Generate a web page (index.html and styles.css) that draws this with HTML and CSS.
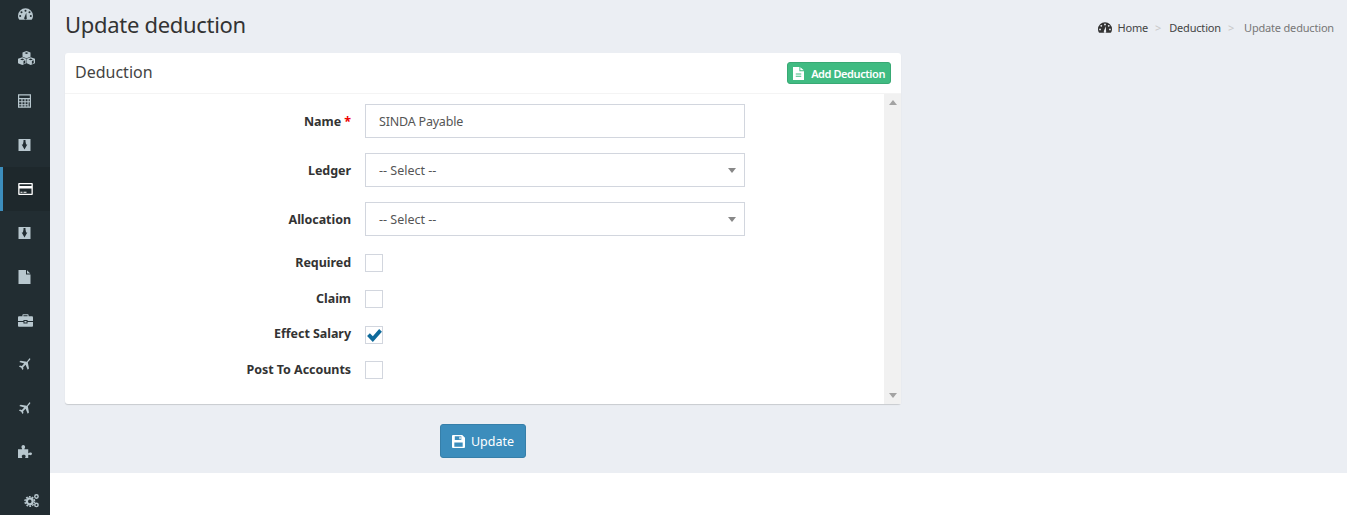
FILE: index.html
```html
<!DOCTYPE html>
<html lang="en">
<head>
<meta charset="utf-8">
<title>Update deduction</title>
<link rel="stylesheet" href="styles.css">
</head>
<body>
<div class="app">
  <aside class="sidebar">
    <a class="nav-item"><svg class="ico i-gauge" viewBox="0.5 2 15 11.500"><path fill-rule="evenodd" d="M8 2a7.500 7.500 0 0 0-7.500 7.500c0 1.700.5 3 1.400 4h12.200c.9-1 1.400-2.300 1.400-4A7.500 7.500 0 0 0 8 2zM8 3.500a1 1 0 1 1 0 2 1 1 0 0 1 0-2zM4 5a1 1 0 1 1 0 2 1 1 0 0 1 0-2zM12 5a1 1 0 1 1 0 2 1 1 0 0 1 0-2zM2.700 8.800a1 1 0 1 1 0 2 1 1 0 0 1 0-2zM13.300 8.800a1 1 0 1 1 0 2 1 1 0 0 1 0-2zM8.800 6.500l.4 5a1.300 1.300 0 1 1-2.400 0z"/></svg></a>
    <a class="nav-item"><svg class="ico i-cubes" viewBox="0.500 0.500 17 14"><path fill-rule="evenodd" d="M9 .5l4 1.500v4.200L9 7.800 5 6.200V2zM4.800 6.800l4 1.500v4.400l-4 1.800-4.300-1.800V8.300zM13.200 6.800l4.300 1.500v4.400l-4.300 1.800-4-1.800V8.300zM9 1.800L7 2.600l2 .8 2-.8zM4.800 8.100L2.600 8.900l2.200.8 2.100-.8zM13.200 8.100l-2.100.8 2.100.8 2.200-.8zM6 10.500v2.900l1.800-.8v-2.800zM14.400 10.500v2.900l1.800-.8v-2.800z"/></svg></a>
    <a class="nav-item"><svg class="ico i-calc" viewBox="1.500 1.500 13 13.500"><path fill-rule="evenodd" d="M1.500 1.500h13v13.500h-13zM2.700 2.700v2.600h10.600V2.700zM2.700 6.500v2h2.200v-2zM6 6.500v2h2v-2zM9.100 6.500v2h1.900v-2zM12.100 6.500v2h1.200v-2zM2.700 9.500v2h2.200v-2zM6 9.500v2h2v-2zM9.100 9.500v2h1.900v-2zM12.100 9.500v4.300h1.200V9.500zM2.700 12.400v1.400h2.200v-1.400zM6 12.400v1.400h2v-1.400zM9.100 12.400v1.400h1.900v-1.400z"/></svg></a>
    <a class="nav-item"><svg class="ico i-down" viewBox="2 2 12 12"><path fill-rule="evenodd" d="M2 2h12v12H2zM7 3v1.500l-.6 3H5.200L8 12.500l2.800-5H9.600L9 4.500V3z"/></svg></a>
    <a class="nav-item active"><svg class="ico i-card" viewBox="0.700 1 14.600 12"><path fill-rule="evenodd" d="M1.500 1h13c.4 0 .8.300.8.800v10.400c0 .5-.4.800-.8.800h-13c-.4 0-.8-.3-.8-.8V1.800c0-.5.4-.8.800-.8zM2 2.200v1.800h12V2.200zM2 6.400v5.400h12V6.400zM3 9.800h2v1H3zM6 9.800h3v1H6z"/></svg></a>
    <a class="nav-item"><svg class="ico i-down" viewBox="2 2 12 12"><path fill-rule="evenodd" d="M2 2h12v12H2zM7 3v1.500l-.6 3H5.200L8 12.500l2.800-5H9.600L9 4.500V3z"/></svg></a>
    <a class="nav-item"><svg class="ico i-file" viewBox="2 1 12 14"><path d="M2 1h7.500v4.500H14V15H2zM10.500 1.200L13.800 4.500h-3.300z"/></svg></a>
    <a class="nav-item"><svg class="ico i-case" viewBox="0.700 1 14.600 12.200"><path fill-rule="evenodd" d="M5 3V1.800C5 1.300 5.300 1 5.800 1h4.400c.5 0 .8.300.8.800V3h3.200c.6 0 1.100.5 1.100 1.100V7.500H10V6.500H6v1H.7V4.100C.7 3.500 1.200 3 1.800 3zM6 2v1h4V2zM.7 8.500H6v1.500h4V8.500h5.300v3.600c0 .6-.5 1.100-1.100 1.100H1.800c-.6 0-1.100-.5-1.100-1.100zM7 7.500h2v1.500H7z"/></svg></a>
    <a class="nav-item"><svg class="ico i-plane" viewBox="1 1 14 14.500"><path d="M13.800 1.300c.8.300.9 1 .4 1.700L11.700 5.700l1.300 7-1.400 1.400-2.400-5.500-2.700 2.700.3 2.100-1.100 1.100-1.300-2.600-2.600-1.300 1.100-1.100 2.100.3 2.700-2.700L2.200 5.400 3.600 4l7 1.300 2.500-3.400c.1-.2.400-.5.700-.6z"/></svg></a>
    <a class="nav-item"><svg class="ico i-plane" viewBox="1 1 14 14.500"><path d="M13.800 1.300c.8.300.9 1 .4 1.700L11.700 5.700l1.300 7-1.400 1.400-2.400-5.500-2.700 2.700.3 2.100-1.100 1.100-1.300-2.600-2.600-1.300 1.100-1.100 2.100.3 2.700-2.700L2.200 5.400 3.600 4l7 1.300 2.500-3.400c.1-.2.400-.5.700-.6z"/></svg></a>
    <a class="nav-item"><svg class="ico i-puzzle" viewBox="1.500 2 13 12"><path d="M1.500 6h3.300c.6 0 .7-.4.400-.9-.4-.5-.5-.9-.5-1.300C4.700 2.800 5.500 2 6.400 2s1.700.8 1.700 1.800c0 .4-.2.800-.5 1.300-.3.500-.2.900.4.900H11v3.100c0 .5.400.6.800.3.400-.3.700-.4 1.100-.4.900 0 1.600.5 1.600 1.200s-.7 1.300-1.600 1.300c-.4 0-.7-.1-1.100-.4-.4-.3-.8-.2-.8.300V14H8.500c-.4 0-.5-.4-.2-.8.2-.3.300-.6.300-.9 0-.8-.8-1.300-1.800-1.300s-1.800.5-1.800 1.300c0 .3.100.6.300.9.300.4.200.8-.2.800H1.500z"/></svg></a>
    <a class="nav-gear"><svg class="ico i-gear" viewBox="0 0 18 16"><g fill="none" stroke="currentColor"><circle cx="6.500" cy="9" r="3.300" stroke-width="2.600"/><circle cx="6.500" cy="9" r="5.400" stroke-width="1.600" stroke-dasharray="2 1.400"/><circle cx="14" cy="3.500" r="1.900" stroke-width="1.600"/><circle cx="14" cy="13" r="1.900" stroke-width="1.600"/></g></svg></a>
  </aside>

  <div class="content-col">
    <main class="content">
      <header class="page-head">
        <h1 class="page-title">Update deduction</h1>
        <nav class="crumbs">
          <svg class="crumb-ico" viewBox="0.5 2 15 11.500"><path fill-rule="evenodd" d="M8 2a7.500 7.500 0 0 0-7.500 7.500c0 1.700.5 3 1.400 4h12.200c.9-1 1.400-2.300 1.400-4A7.500 7.500 0 0 0 8 2zM8 3.500a1 1 0 1 1 0 2 1 1 0 0 1 0-2zM4 5a1 1 0 1 1 0 2 1 1 0 0 1 0-2zM12 5a1 1 0 1 1 0 2 1 1 0 0 1 0-2zM2.700 8.800a1 1 0 1 1 0 2 1 1 0 0 1 0-2zM13.300 8.800a1 1 0 1 1 0 2 1 1 0 0 1 0-2zM8.800 6.500l.4 5a1.300 1.300 0 1 1-2.400 0z"/></svg>
          <a class="crumb">Home</a><span class="sep">&gt;</span>
          <a class="crumb">Deduction</a><span class="sep">&gt;</span>
          <span class="crumb current">Update deduction</span>
        </nav>
      </header>

      <section class="card">
        <div class="card-head">
          <h3 class="card-title">Deduction</h3>
          <a class="btn-add"><svg class="btn-add-ico" viewBox="0 0 12 14"><path fill-rule="evenodd" d="M0 0h7v4.500h5V14H0zM8 .2L11.800 3.500H8zM3 7v1h6V7zM3 9.500v1h6v-1z"/></svg>Add Deduction</a>
        </div>
        <div class="card-body">
          <form class="form">
            <div class="row">
              <label class="lbl">Name <span class="req">*</span></label>
              <input class="field" type="text" value="SINDA Payable">
            </div>
            <div class="row">
              <label class="lbl">Ledger</label>
              <div class="select-wrap"><div class="field select">-- Select --</div><span class="caret"></span></div>
            </div>
            <div class="row">
              <label class="lbl">Allocation</label>
              <div class="select-wrap"><div class="field select">-- Select --</div><span class="caret"></span></div>
            </div>
            <div class="row row-check">
              <label class="lbl">Required</label><span class="box"></span>
            </div>
            <div class="row row-check">
              <label class="lbl">Claim</label><span class="box"></span>
            </div>
            <div class="row row-check">
              <label class="lbl">Effect Salary</label>
              <span class="box"><svg class="tick" viewBox="0 0 16 14"><path d="M0 7.500L3 4.500l3.200 3.200L13 0 16 3 6.200 14z"/></svg></span>
            </div>
            <div class="row row-check">
              <label class="lbl">Post To Accounts</label><span class="box"></span>
            </div>
          </form>
          <div class="scrollbar"><span class="arrow up"></span><span class="arrow down"></span></div>
        </div>
      </section>

      <div class="actions">
        <button class="btn-update" type="button"><svg class="btn-update-ico" viewBox="0 0 14 14"><path fill-rule="evenodd" d="M1 0h10l3 3v10c0 .6-.4 1-1 1H1c-.6 0-1-.4-1-1V1c0-.6.4-1 1-1zM3 1.300v4h7v-4zM8 1.900h1.300v2.800H8zM2.500 8v4.700h9V8z"/></svg>Update</button>
      </div>
    </main>
  </div>
</div>
</body>
</html>
```
FILE: styles.css
```css
* { box-sizing: border-box; }
html, body { margin: 0; height: 100%; background: #fff; }
body { font-family: "Noto Sans", sans-serif; font-size: 13px; color: #333; overflow: hidden; }

.app { display: flex; height: 515px; }

.sidebar { width: 50px; flex: none; background: #222d32; display: flex; flex-direction: column; color: #b8c7ce; margin-top: -8px; height: 523px; }
.nav-item { height: 43.8px; flex: none; display: flex; align-items: center; padding-left: 18px; }
.nav-item.active { background: #1e282c; color: #fff; border-left: 3px solid #3c8dbc; padding-left: 15px; }
.nav-gear { display: flex; justify-content: flex-end; padding: 19px 10px 0 0; }
.ico { fill: currentColor; display: block; }
.i-gauge { width: 15px; height: 12px; }
.i-cubes { width: 17px; height: 14px; }
.i-calc { width: 13px; height: 14px; }
.i-down { width: 13px; height: 12px; }
.i-card { width: 15px; height: 12px; }
.i-file { width: 13px; height: 14px; }
.i-case { width: 15px; height: 13px; }
.i-plane { width: 13px; height: 13px; }
.i-puzzle { width: 14px; height: 13px; }
.i-gear { width: 16px; height: 15px; }

.content-col { flex: 1; min-width: 0; }
.content { height: 473px; background: #ebeef3; padding: 0 13px 0 15px; }

.page-head { display: flex; justify-content: space-between; align-items: center; height: 53px; }
.page-title { margin: 0; font-weight: 400; font-size: 22px; letter-spacing: -0.3px; color: #333; padding-bottom: 5px; }
.crumbs { display: flex; align-items: center; font-size: 11px; letter-spacing: -0.18px; color: #444; padding-top: 1px; }
.crumb-ico { width: 14px; height: 11px; fill: #333; margin-right: 5px; }
.sep { color: #c8c8c8; margin: 0 8px 0 7px; }
.current { color: #777; margin-left: 2px; }

.card { width: 836px; background: #fff; border-radius: 3px; box-shadow: 0 1px 1px rgba(0,0,0,.15); }
.card-head { height: 41px; border-bottom: 1px solid #f4f4f4; display: flex; align-items: center; justify-content: space-between; padding: 0 10px; }
.card-title { margin: 0; font-size: 16px; font-weight: 400; color: #444; padding-bottom: 2px; }
.btn-add { display: flex; align-items: center; height: 22px; padding: 0 5px; background: #40bb82; border: 1px solid #38a974; border-radius: 3px; color: #fff; font-size: 11px; letter-spacing: -0.42px; font-weight: 600; }
.btn-add-ico { width: 11px; height: 13px; fill: #fff; margin-right: 7px; }

.card-body { display: flex; height: 310px; }
.form { flex: 1; padding-top: 10px; }
.row { display: flex; align-items: center; height: 34px; margin-bottom: 15px; }
.row-check { height: 20.670px; margin-bottom: 15px; position: relative; top: 2px; }
.row-check .lbl { padding-bottom: 1.4px; }
.lbl { width: 286px; text-align: right; font-weight: 700; font-size: 12.500px; letter-spacing: -0.05px; color: #333; margin-right: 14px; }
.req { color: #e00; }
.field { width: 380px; height: 34px; border: 1px solid #d2d6de; background: #fff; padding: 0 13px; font: 12.500px "Noto Sans", sans-serif; letter-spacing: -0.2px; color: #555; outline: none; }
.select { display: flex; align-items: center; letter-spacing: 0; }
.select-wrap { position: relative; }
.caret { position: absolute; right: 9px; top: 15px; border: 4.500px solid transparent; border-top: 5px solid #888; border-bottom: 0; }
.box { width: 18px; height: 18px; border: 1px solid #d2d6de; background: #fff; position: relative; flex: none; display: block; }
.tick { position: absolute; left: 1px; top: 2px; width: 15px; height: 13px; fill: #0e6a9b; }

.scrollbar { width: 17px; flex: none; background: #f1f1f1; display: flex; flex-direction: column; justify-content: space-between; align-items: center; padding: 6px 0; }
.arrow { border: 4px solid transparent; display: block; }
.arrow.up { border-bottom: 5px solid #a3a3a3; border-top: 0; }
.arrow.down { border-top: 5px solid #a3a3a3; border-bottom: 0; }

.actions { padding: 20px 0 0 375px; }
.btn-update { display: flex; align-items: center; width: 86px; height: 34px; justify-content: center; background: #3c8dbc; border: 1px solid #367fa9; border-radius: 3px; color: #fff; font: 12.500px "Noto Sans", sans-serif; }
.btn-update-ico { width: 13px; height: 13px; fill: #fff; margin-right: 6px; }
```
